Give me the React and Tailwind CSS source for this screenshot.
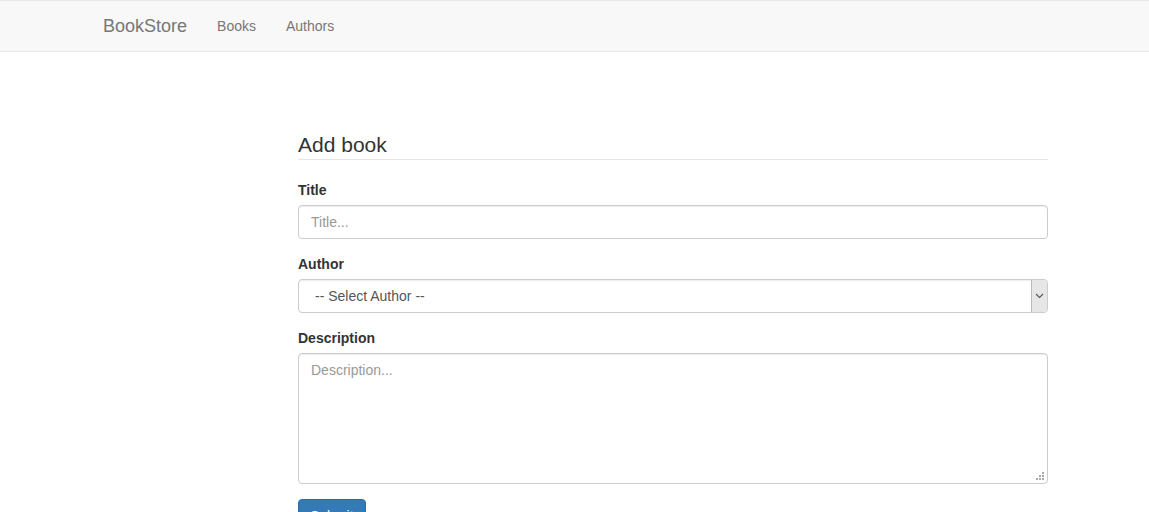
export default function App() {
  const font = { fontFamily: '"Liberation Sans", Arial, sans-serif' };
  return (
    <div className="h-[512px] w-full overflow-hidden bg-white text-[14px] text-[#333]" style={font}>
      <nav className="border-y border-[#e7e7e7] bg-[#f8f8f8]">
        <div className="flex h-[50px] items-center pl-[88px]">
          <a className="px-[15px] text-[18px] leading-5 text-[#777]">BookStore</a>
          <a className="px-[15px] text-[14px] leading-5 text-[#777]">Books</a>
          <a className="px-[15px] text-[14px] leading-5 text-[#777]">Authors</a>
        </div>
      </nav>
      <div className="ml-[298px] mt-[77px] w-[750px]">
        <div className="mb-5 h-[31px] border-b border-[#e5e5e5] text-[21px] leading-[32px] text-[#333]">Add book</div>
        <div className="mb-[15px]">
          <div className="mb-[5px] text-[14px] font-bold leading-5">Title</div>
          <input
            className="block h-[34px] w-full rounded border border-[#ccc] px-3 text-[14px] text-[#555] shadow-[inset_0_1px_1px_rgba(0,0,0,0.075)] outline-none placeholder:text-[#999]"
            placeholder="Title..."
            style={font}
          />
        </div>
        <div className="mb-[15px]">
          <div className="mb-[5px] text-[14px] font-bold leading-5">Author</div>
          <div className="relative">
            <select
              className="block h-[34px] w-full appearance-none rounded border border-[#ccc] bg-white pl-4 pr-3 text-[14px] text-[#555] shadow-[inset_0_1px_1px_rgba(0,0,0,0.075)] outline-none"
              style={font}
              defaultValue=""
            >
              <option value="">-- Select Author --</option>
            </select>
            <div className="pointer-events-none absolute right-[1px] top-[1px] flex h-[32px] w-[16px] items-center justify-center rounded-r-[3px] border-l border-[#b9b9b9] bg-[#e6e6e6]">
              <svg width="9" height="6" viewBox="0 0 9 6">
                <path d="M1 1 L4.5 4.5 L8 1" fill="none" stroke="#555" strokeWidth="1.1" />
              </svg>
            </div>
          </div>
        </div>
        <div className="mb-[15px]">
          <div className="mb-[5px] text-[14px] font-bold leading-5">Description</div>
          <div className="relative">
            <textarea
              className="block h-[131px] w-full resize-none rounded border border-[#ccc] px-3 py-[6px] text-[14px] leading-5 text-[#555] shadow-[inset_0_1px_1px_rgba(0,0,0,0.075)] outline-none placeholder:text-[#999]"
              placeholder="Description..."
              style={font}
            />
            <svg className="pointer-events-none absolute bottom-[3px] right-[3px]" width="9" height="9" viewBox="0 0 9 9">
              <rect x="6" y="0" width="2" height="2" fill="#aaa" />
              <rect x="3" y="3" width="2" height="2" fill="#aaa" />
              <rect x="6" y="3" width="2" height="2" fill="#aaa" />
              <rect x="0" y="6" width="2" height="2" fill="#aaa" />
              <rect x="3" y="6" width="2" height="2" fill="#aaa" />
              <rect x="6" y="6" width="2" height="2" fill="#aaa" />
            </svg>
          </div>
        </div>
        <button className="rounded border border-[#2e6da4] bg-[#337ab7] px-[11px] py-[6px] text-[14px] leading-5 text-white" style={font}>
          Submit
        </button>
      </div>
    </div>
  );
}
